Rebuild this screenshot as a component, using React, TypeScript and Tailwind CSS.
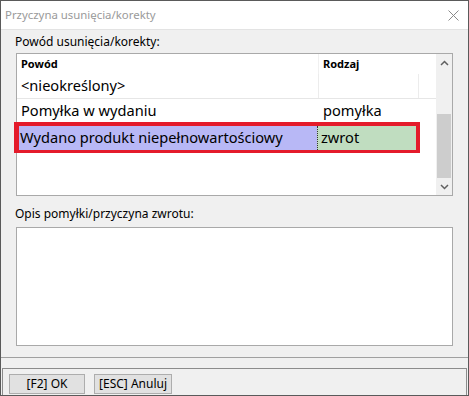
export default function App() {
  return (
    <div className="w-[469px] h-[396px] flex flex-col border border-[#5a5a5a] bg-[#f0f0f0] font-['Noto_Sans',sans-serif] text-black overflow-hidden">
      {/* title bar */}
      <div className="h-[28px] shrink-0 bg-white flex items-center justify-between pl-[4px] pr-[9px]">
        <span className="text-[11.4px] text-[#9a9a9a]">Przyczyna usunięcia/korekty</span>
        <svg width="11" height="11" viewBox="0 0 11 11">
          <path d="M0.5 0.5 L10.5 10.5 M10.5 0.5 L0.5 10.5" stroke="#8a8a8a" strokeWidth="1" />
        </svg>
      </div>

      <div className="flex-1 flex flex-col px-[15px] pt-[4px] border-t border-[#e3e3e3]">
        <p className="text-[12px] leading-[16px] ml-[-1px]">Powód usunięcia/korekty:</p>

        {/* list */}
        <div className="mt-[3px] h-[143px] flex border border-[#a9a9a9] bg-white">
          <div className="flex-1 flex flex-col">
            <div className="h-[20px] flex text-[11px] font-bold">
              <div className="w-[301px] pl-[4px] flex items-center">Powód</div>
              <div className="w-[101px] pl-[4px] flex items-center border-l border-[#f0f0f0]">Rodzaj</div>
            </div>
            <div className="h-[25px] flex text-[14.6px] border-b border-[#e6e6e6]">
              <div className="w-[301px] pl-[4px] flex items-center">&lt;nieokreślony&gt;</div>
              <div className="w-[101px] pl-[4px] flex items-center border-l border-r border-[#ececec]" />
            </div>
            <div className="h-[23px] flex text-[14.6px]">
              <div className="w-[301px] pl-[4px] flex items-center">Pomyłka w wydaniu</div>
              <div className="w-[101px] pl-[4px] flex items-center border-l border-white">pomyłka</div>
            </div>
            <div className="h-[31px] w-[406px] -ml-[3px] flex text-[14.6px] border-[4px] border-b-[3px] border-l-[5px] border-[#e41b2b]">
              <div className="w-[298px] pl-[1px] flex items-center bg-[#b8b8f6]">Wydano produkt niepełnowartościowy</div>
              <div className="flex-1 pl-[3px] flex items-center bg-[#c0ddc0] border-l border-dotted border-[#333]">zwrot</div>
            </div>
          </div>

          {/* scrollbar */}
          <div className="w-[16px] flex flex-col bg-[#f0f0f0]">
            <div className="h-[18px] flex items-center justify-center">
              <svg width="9" height="6" viewBox="0 0 9 6">
                <path d="M1 5 L4.5 1.5 L8 5" stroke="#606060" strokeWidth="1.5" fill="none" />
              </svg>
            </div>
            <div className="h-[42px]" />
            <div className="h-[64px] mx-[1px] bg-[#cdcdcd]" />
            <div className="flex-1 flex items-center justify-center">
              <svg width="9" height="6" viewBox="0 0 9 6">
                <path d="M1 1 L4.5 4.5 L8 1" stroke="#606060" strokeWidth="1.5" fill="none" />
              </svg>
            </div>
          </div>
        </div>

        <p className="mt-[10px] text-[12px] leading-[16px] ml-[-1px]">Opis pomyłki/przyczyna zwrotu:</p>
        <div className="mt-[5px] h-[119px] border border-[#a9a9a9] bg-white" />
      </div>

      {/* footer */}
      <div className="h-[12px] shrink-0 border-b border-[#a0a0a0]" />
      <div className="h-[31px] shrink-0 mt-[10px] mx-[1px] mb-[1px] border border-[#8c8c8c] flex items-center gap-[9px] px-[6px]">
        <button className="w-[76px] h-[20px] text-[12px] bg-[#e1e1e1] border border-[#adadad] leading-none">[F2] OK</button>
        <button className="w-[78px] h-[20px] text-[12px] bg-[#e1e1e1] border border-[#adadad] leading-none">[ESC] Anuluj</button>
      </div>
    </div>
  );
}
